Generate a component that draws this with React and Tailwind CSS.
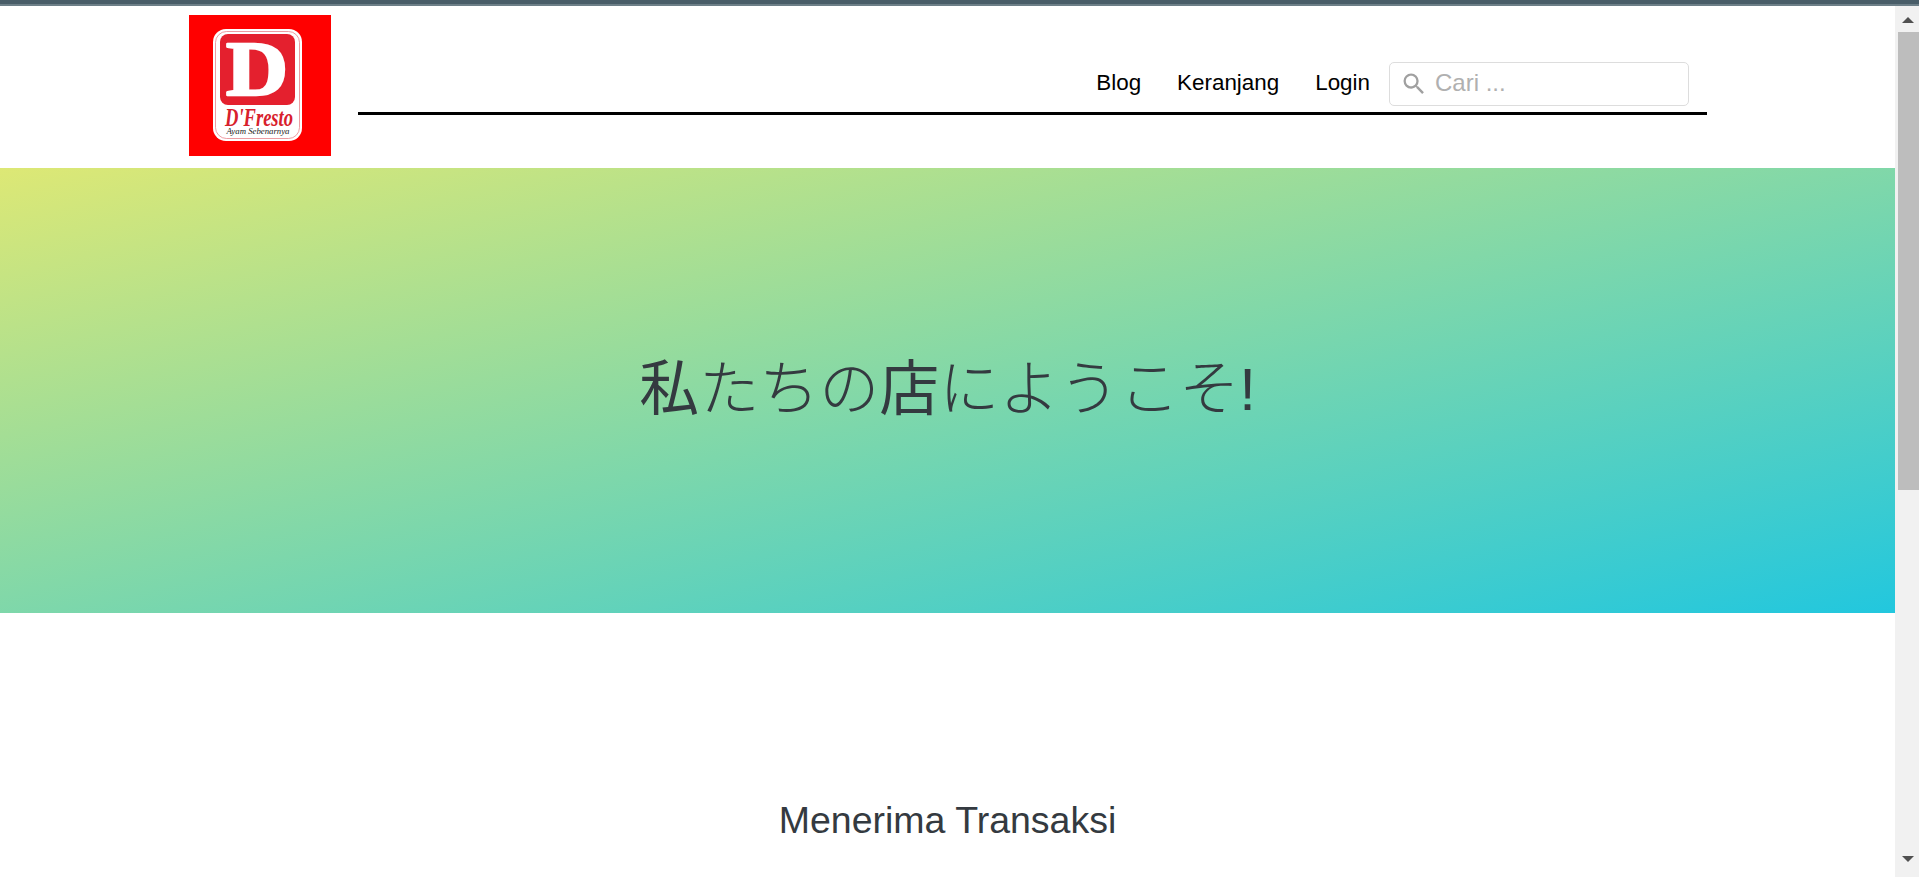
import React from "react";
import { MdSearch } from "react-icons/md";

function Logo() {
  return (
    <svg viewBox="0 0 142 141" className="w-[142px] h-[141px] block shrink-0">
      <rect width="142" height="141" fill="#ff0000" />
      <rect x="24" y="14" width="89" height="112" rx="13" fill="#ffffff" />
      <rect x="26.5" y="16.5" width="84" height="107" rx="11" fill="none" stroke="#e8838a" strokeWidth="0.8" />
      <rect x="31" y="19" width="75" height="71" rx="8" fill="#e4202e" />
      <text x="68" y="80" textAnchor="middle" fontFamily="'Liberation Serif', serif" fontWeight="700" fontSize="78" fill="#ffffff" stroke="#ffffff" strokeWidth="2.5" strokeLinejoin="round" textLength="62" lengthAdjust="spacingAndGlyphs">D</text>
      <text x="70" y="110.5" textAnchor="middle" fontFamily="'Liberation Serif', serif" fontWeight="700" fontStyle="italic" fontSize="26" fill="#d8202c" textLength="68" lengthAdjust="spacingAndGlyphs">D'Fresto</text>
      <text x="69" y="119" textAnchor="middle" fontFamily="'Liberation Serif', serif" fontStyle="italic" fontSize="8" fill="#222222" textLength="63" lengthAdjust="spacingAndGlyphs">Ayam Sebenarnya</text>
    </svg>
  );
}

function Scrollbar() {
  return (
    <div className="w-[24px] shrink-0 h-full bg-[#f1f1f1] flex flex-col items-center">
      <div className="h-[26px] w-full flex items-center justify-center pt-[1px]">
        <div className="w-0 h-0 border-x-[6px] border-x-transparent border-b-[6px] border-b-[#505050] ml-[1px]" />
      </div>
      <div className="w-[21px] h-[458px] bg-[#bdbdbd] ml-[2px]" />
      <div className="flex-1" />
      <div className="h-[24px] w-full flex items-start justify-center pt-[3px]">
        <div className="w-0 h-0 border-x-[6px] border-x-transparent border-t-[6px] border-t-[#505050] ml-[1px]" />
      </div>
    </div>
  );
}

export default function App() {
  return (
    <div className="w-[1919px] h-[877px] overflow-hidden flex flex-col bg-white font-['Liberation_Sans',Arial,sans-serif]">
      <div className="h-[6px] shrink-0 bg-[linear-gradient(to_bottom,#495d68_0,#495d68_4px,#6d7f88_4px,#6d7f88_6px)]" />
      <div className="flex flex-1 min-h-0">
        <main className="flex-1 min-w-0 h-full overflow-hidden">
          <header className="h-[162px] pl-[189px] pt-[9px] flex items-start">
            <Logo />
            <nav className="ml-[27px] w-[1349px] h-[99.5px] border-b-[3px] border-black flex items-end justify-end pr-[18px] pb-[5.5px]">
              <a className="text-[22.4px] leading-[44px] text-black mr-[36px] relative top-[-1px]">Blog</a>
              <a className="text-[22.4px] leading-[44px] text-black mr-[36px] relative top-[-1px]">Keranjang</a>
              <a className="text-[22.4px] leading-[44px] text-black mr-[19px] relative top-[-1px]">Login</a>
              <div className="w-[300px] h-[44px] border border-[#dddddd] rounded-[5px] flex items-center pl-[10px] gap-[7px]">
                <MdSearch className="text-[#a0a0a0] w-[28px] h-[28px] shrink-0" />
                <span className="text-[24px] text-[#b0b0b0] relative top-[-1px]">Cari ...</span>
              </div>
            </nav>
          </header>
          <section className="h-[445px] flex items-center justify-center bg-[linear-gradient(167deg,#dde875_0%,#22c7de_100%)]">
            <h1 className="text-[60px] leading-[72px] text-[#343a40] font-light whitespace-nowrap font-['Liberation_Sans','Noto_Sans_CJK_JP',sans-serif] mt-[-1px]">
              <span className="font-normal">私</span>たちの<span className="font-normal">店</span>にようこそ!
            </h1>
          </section>
          <section className="pt-[185px] text-center">
            <h2 className="text-[37.5px] leading-[44px] text-[#343a40] font-normal">Menerima Transaksi</h2>
          </section>
        </main>
        <Scrollbar />
      </div>
    </div>
  );
}
